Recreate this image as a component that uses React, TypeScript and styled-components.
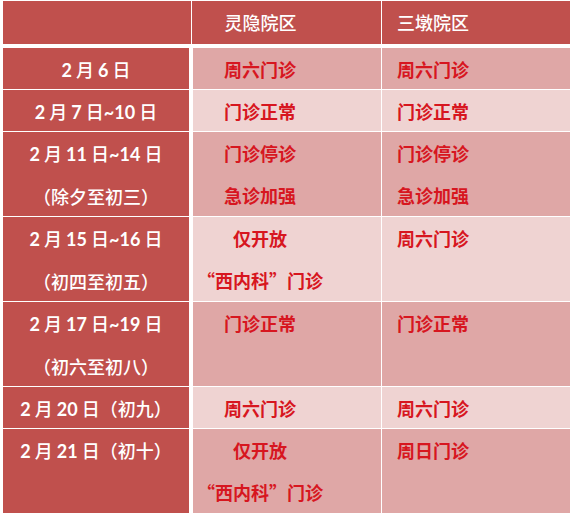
import React from 'react'
import styled, { createGlobalStyle } from 'styled-components'

const GlobalStyle = createGlobalStyle`
  html, body {
    margin: 0;
    padding: 0;
    background: #ffffff;
  }
`

const Page = styled.div`
  width: 574px;
  height: 518px;
  padding: 1px 0 0 3px;
  box-sizing: border-box;
  background: #ffffff;
  font-family: 'Noto Sans CJK SC', sans-serif;
`

const Table = styled.div`
  width: 567px;
  display: flex;
  flex-direction: column;
`

const HeaderRow = styled.div`
  display: grid;
  grid-template-columns: 189px 190px 188px;
  height: 43px;
  margin-bottom: 4px;
`

const HeaderCell = styled.div<{ $pad: number; $divider?: boolean }>`
  background: #c0504d;
  color: #ffffff;
  font-size: 18px;
  font-weight: 500;
  line-height: 43px;
  text-align: center;
  padding-right: ${(p) => p.$pad}px;
  border-right: ${(p) => (p.$divider ? '1px solid #ffffff' : 'none')};
`

const Row = styled.div<{ $tall?: boolean }>`
  display: grid;
  grid-template-columns: 190px 188px 189px;
  grid-template-rows: minmax(0, 1fr);
  height: ${(p) => (p.$tall ? 85 : 42)}px;
  border-bottom: 1px solid #ffffff;
  box-sizing: border-box;
`

const DateCell = styled.div`
  background: #c0504d;
  border-right: 4px solid #ffffff;
  color: #ffffff;
  font-weight: 500;
  font-size: 18px;
  line-height: 42px;
  text-align: center;
  white-space: pre;
  overflow: hidden;
`

const Num = styled.span`
  font-family: Lato, 'Noto Sans CJK SC', sans-serif;
  font-weight: 700;
`

const DataCell = styled.div<{ $light?: boolean; $pad: number; $divider?: boolean }>`
  background: ${(p) => (p.$light ? '#efd3d2' : '#dfa7a6')};
  color: #d7161f;
  font-weight: 700;
  font-size: 18px;
  line-height: 42px;
  text-align: center;
  padding-right: ${(p) => p.$pad}px;
  border-left: ${(p) => (p.$divider ? '1px solid #ffffff' : 'none')};
  white-space: pre;
  overflow: hidden;
`

const Line = styled.div``

interface ScheduleRow {
  date: string[]
  lingyin: string[]
  sandun: string[]
  tall?: boolean
}

const rows: ScheduleRow[] = [
  { date: ['2 月 6 日'], lingyin: ['周六门诊'], sandun: ['周六门诊'] },
  { date: ['2 月 7 日~10 日'], lingyin: ['门诊正常'], sandun: ['门诊正常'] },
  {
    date: ['2 月 11 日~14 日', '（除夕至初三）'],
    lingyin: ['门诊停诊', '急诊加强'],
    sandun: ['门诊停诊', '急诊加强'],
    tall: true,
  },
  {
    date: ['2 月 15 日~16 日', '（初四至初五）'],
    lingyin: ['仅开放', '“西内科”门诊'],
    sandun: ['周六门诊'],
    tall: true,
  },
  {
    date: ['2 月 17 日~19 日', '（初六至初八）'],
    lingyin: ['门诊正常'],
    sandun: ['门诊正常'],
    tall: true,
  },
  { date: ['2 月 20 日（初九）'], lingyin: ['周六门诊'], sandun: ['周六门诊'] },
  {
    date: ['2 月 21 日（初十）'],
    lingyin: ['仅开放', '“西内科”门诊'],
    sandun: ['周日门诊'],
    tall: true,
  },
]

// digits and "~" are bold latin, the chinese parts stay medium
const DateText = ({ text }: { text: string }) => (
  <Line>
    {text.split(/([0-9~]+)/).map((part, i) =>
      i % 2 === 1 ? <Num key={i}>{part}</Num> : <span key={i}>{part}</span>
    )}
  </Line>
)

const App = () => {
  return (
    <Page>
      <GlobalStyle />
      <Table>
        <HeaderRow>
          <HeaderCell $pad={0} $divider />
          <HeaderCell $pad={52} $divider>
            灵隐院区
          </HeaderCell>
          <HeaderCell $pad={86}>三墩院区</HeaderCell>
        </HeaderRow>

        {rows.map((row, i) => {
          const light = i % 2 === 1
          return (
            <Row key={i} $tall={row.tall}>
              <DateCell>
                {row.date.map((d) => (
                  <DateText key={d} text={d} />
                ))}
              </DateCell>
              <DataCell $light={light} $pad={54}>
                {row.lingyin.map((t) => (
                  <Line key={t}>{t}</Line>
                ))}
              </DataCell>
              <DataCell $light={light} $pad={86} $divider>
                {row.sandun.map((t) => (
                  <Line key={t}>{t}</Line>
                ))}
              </DataCell>
            </Row>
          )
        })}
      </Table>
    </Page>
  )
}

export default App
